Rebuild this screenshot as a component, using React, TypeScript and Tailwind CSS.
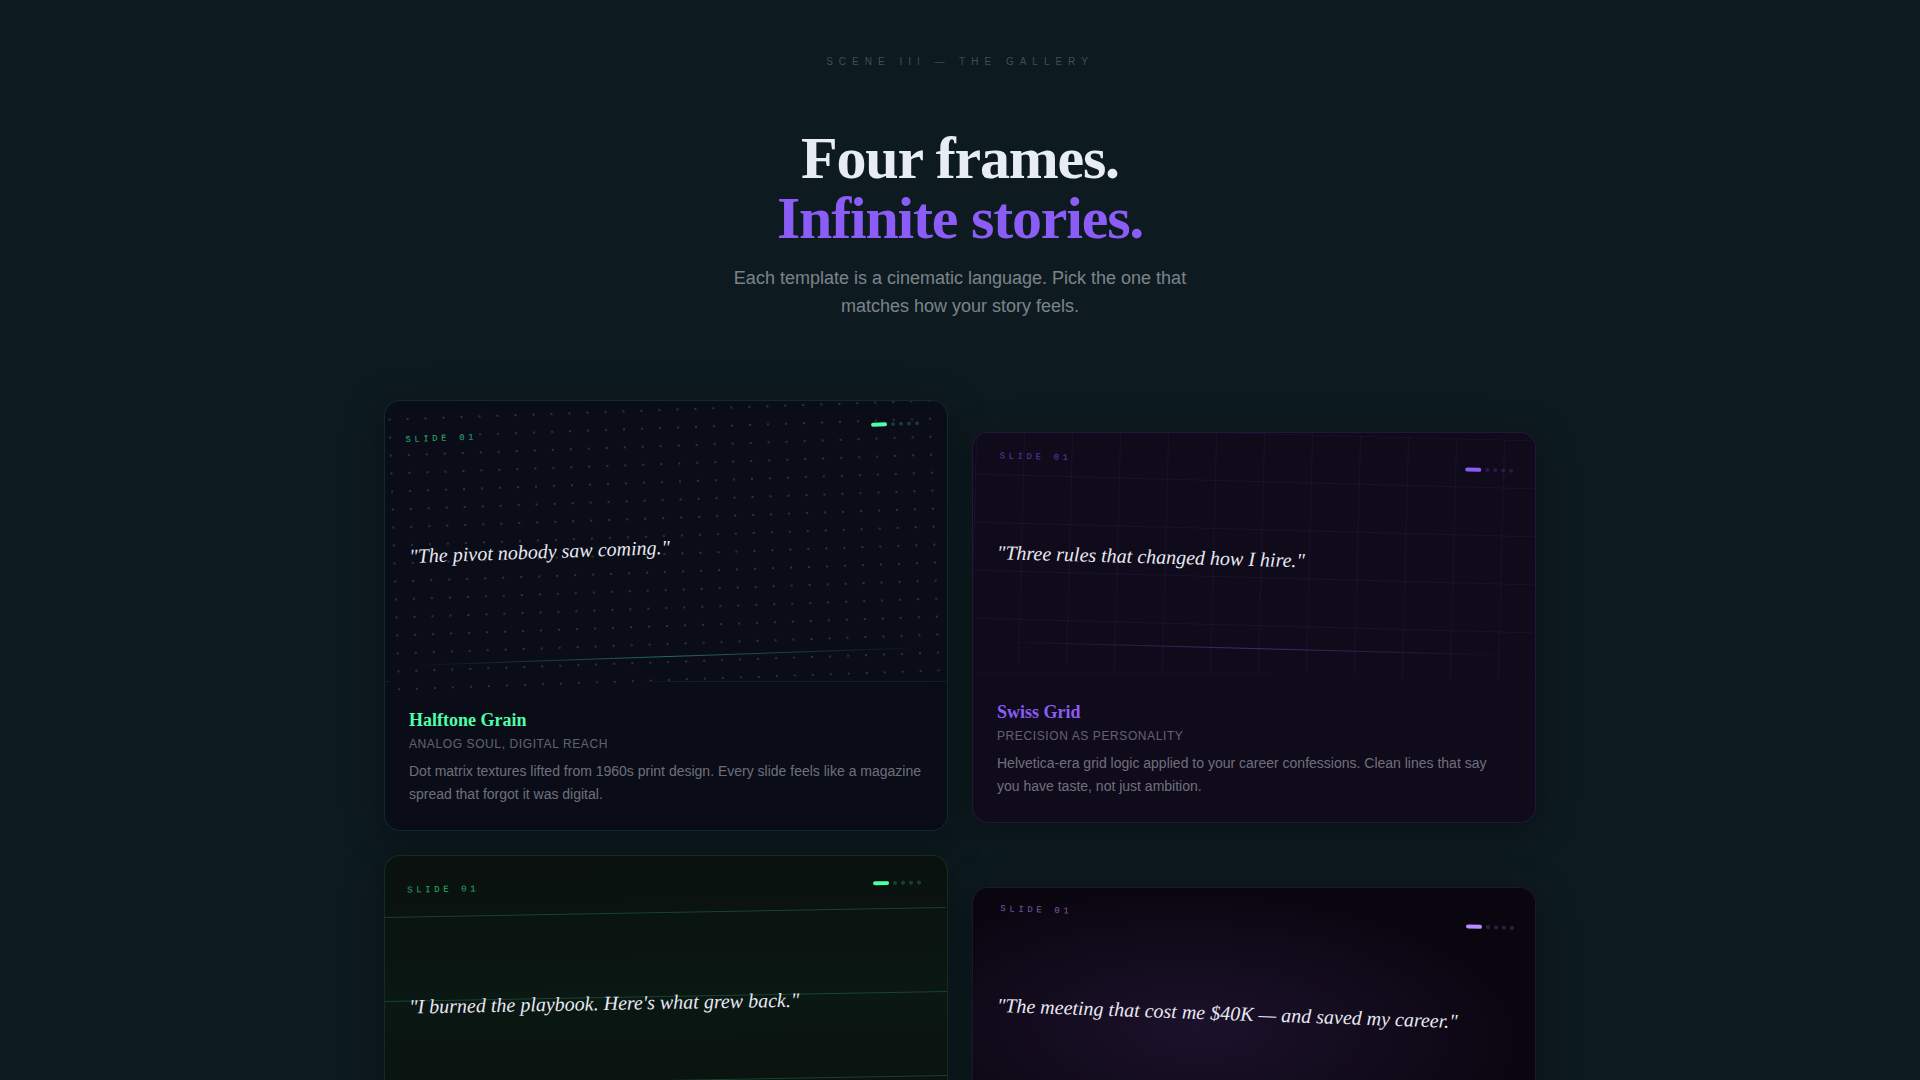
import React from "react";

type Frame = {
  name: string;
  tagline: string;
  description: string;
  quote: string;
  card: string;
  slide: string;
  title: string;
  label: string;
  active: string;
  dot: string;
  divider: string;
  shimmer: string;
  rules?: boolean;
};

const frames: Frame[] = [
  {
    name: "Halftone Grain",
    tagline: "Analog soul, digital reach",
    description:
      "Dot matrix textures lifted from 1960s print design. Every slide feels like a magazine spread that forgot it was digital.",
    quote: "\"The pivot nobody saw coming.\"",
    card: "bg-[#0a0c18] border-[#4dffa6]/12",
    slide:
      "h-[280px] -rotate-2 bg-[#0a0c18] bg-[radial-gradient(circle,rgba(255,255,255,0.15)_1px,transparent_1px)] bg-[size:18px_18px]",
    title: "text-[#4dffa6]",
    label: "text-[#34e08e]/75",
    active: "bg-[#4dffa6]",
    dot: "bg-[#4dffa6]/20",
    divider: "border-[#4dffa6]/8",
    shimmer: "via-[#4dffa6]/40",
  },
  {
    name: "Swiss Grid",
    tagline: "Precision as personality",
    description:
      "Helvetica-era grid logic applied to your career confessions. Clean lines that say you have taste, not just ambition.",
    quote: "\"Three rules that changed how I hire.\"",
    card: "mt-8 bg-[#0f0b1b] border-[#8b5cf6]/15",
    slide:
      "h-[240px] rotate-[1.5deg] bg-[#0f0b1b] bg-[linear-gradient(rgba(139,92,246,0.07)_1px,transparent_1px),linear-gradient(90deg,rgba(139,92,246,0.07)_1px,transparent_1px)] bg-[size:48px_48px]",
    title: "text-[#8b5cf6]",
    label: "text-[#8b5cf6]/65",
    active: "bg-[#8b5cf6]",
    dot: "bg-[#8b5cf6]/20",
    divider: "border-[#8b5cf6]/5",
    shimmer: "via-[#8b5cf6]/40",
  },
  {
    name: "Growth Organic",
    tagline: "Roots before reach",
    description:
      "Horizon lines and forest tones for stories that took seasons to tell. Quiet on the surface, alive underneath.",
    quote: "\"I burned the playbook. Here's what grew back.\"",
    card: "bg-[#0a120f] border-[#4dffa6]/12",
    slide: "h-[280px] -rotate-1 bg-[linear-gradient(180deg,#0a110e_0%,#0a1712_50%,#0a110e_100%)]",
    title: "text-[#4dffa6]",
    label: "text-[#34e08e]/75",
    active: "bg-[#4dffa6]",
    dot: "bg-[#4dffa6]/20",
    divider: "border-[#4dffa6]/8",
    shimmer: "via-[#4dffa6]/40",
    rules: true,
  },
  {
    name: "Dark Cinematic",
    tagline: "Every post a premiere",
    description:
      "Low light, long shadows and a single warm source. Made for the stories you only tell once.",
    quote: "\"The meeting that cost me $40K — and saved my career.\"",
    card: "mt-8 bg-[#0a0610] border-[#c084fc]/12",
    slide: "h-[240px] rotate-2 bg-[radial-gradient(ellipse_at_40%_60%,#1c112b_0%,#0a0610_70%)]",
    title: "text-[#b98cff]",
    label: "text-[#b98cff]/65",
    active: "bg-[#b98cff]",
    dot: "bg-[#b98cff]/20",
    divider: "border-[#b98cff]/5",
    shimmer: "via-[#b98cff]/40",
  },
];

function FrameCard({ frame }: { frame: Frame }) {
  return (
    <article
      className={`self-start overflow-hidden rounded-2xl border shadow-[0_8px_40px_rgba(0,0,0,0.3)] ${frame.card}`}
    >
      <div className={`relative flex items-center px-6 pt-3 ${frame.slide}`}>
        {frame.rules && (
          <>
            <div className="absolute inset-x-0 top-[20%] h-px bg-[#4dffa6]/20" />
            <div className="absolute inset-x-0 top-[50%] h-px bg-[#4dffa6]/20" />
            <div className="absolute inset-x-0 top-[80%] h-px bg-[#4dffa6]/20" />
          </>
        )}
        <div className="absolute inset-x-6 top-6 flex h-3.5 items-center justify-between">
          <span
            className={`self-start font-['Liberation_Mono',monospace] text-[9px] leading-3 tracking-[0.4em] ${frame.label}`}
          >
            SLIDE 01
          </span>
          <span className="flex gap-1">
            <span className={`h-1 w-4 rounded-full ${frame.active}`} />
            {[2, 3, 4, 5].map((n) => (
              <span key={n} className={`size-1 rounded-full ${frame.dot}`} />
            ))}
          </span>
        </div>
        <p className="relative font-['Liberation_Serif',serif] text-xl italic leading-7 text-[#e8e8f2]">
          {frame.quote}
        </p>
        <div
          className={`absolute inset-x-6 bottom-6 h-px bg-linear-to-r from-transparent to-transparent ${frame.shimmer}`}
        />
      </div>
      <div className={`border-t p-6 ${frame.divider}`}>
        <h3 className={`font-['Liberation_Serif',serif] text-lg font-bold leading-7 ${frame.title}`}>
          {frame.name}
        </h3>
        <p className="mb-1.5 text-xs uppercase leading-5 tracking-wider text-[#e8edf5]/40">{frame.tagline}</p>
        <p className="text-sm leading-[23px] text-[#e8edf5]/45">{frame.description}</p>
      </div>
    </article>
  );
}

export default function App() {
  return (
    <main className="min-h-screen bg-[#0d1a1f] px-6 pb-24 font-['Liberation_Sans',sans-serif]">
      <header className="flex flex-col items-center pt-[54px] text-center">
        <p className="text-[10px] uppercase leading-[15px] tracking-[0.6em] text-[#e8edf5]/25">
          Scene III — The Gallery
        </p>
        <h2 className="mt-[59px] font-['Liberation_Serif',serif] text-6xl font-bold leading-none tracking-[-0.02em] text-[#e8edf5]">
          Four frames.
          <br />
          <span className="text-[#8b5cf6]">Infinite stories.</span>
        </h2>
        <p className="mt-4 max-w-[480px] text-lg leading-7 text-[#e8edf5]/50">
          Each template is a cinematic language. Pick the one that matches how your story feels.
        </p>
      </header>
      <section className="mx-auto mt-20 grid max-w-6xl grid-cols-2 gap-6">
        {frames.map((frame) => (
          <FrameCard key={frame.name} frame={frame} />
        ))}
      </section>
    </main>
  );
}
